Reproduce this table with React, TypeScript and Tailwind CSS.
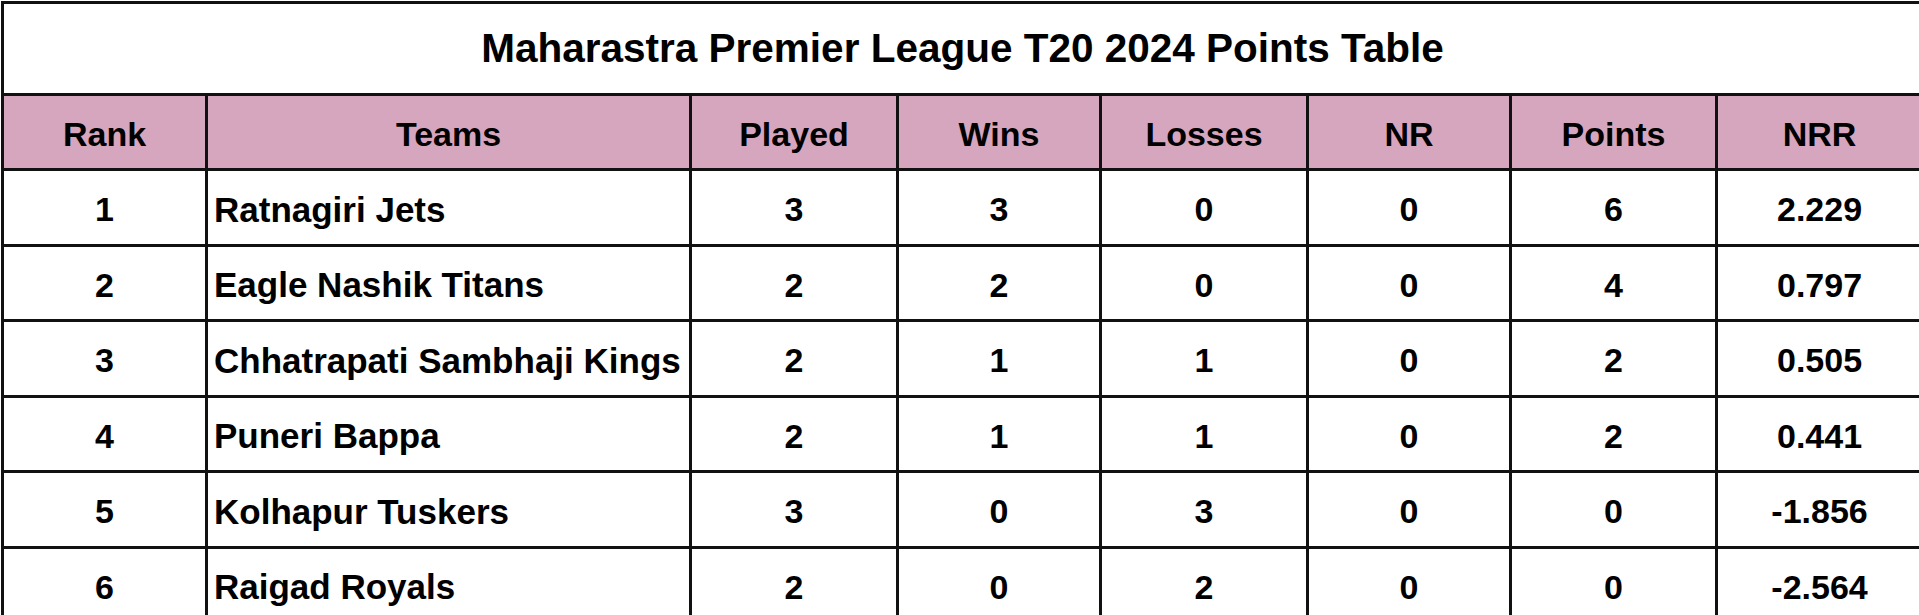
const COLS = [
  { label: 'Rank', w: 204 },
  { label: 'Teams', w: 484 },
  { label: 'Played', w: 207 },
  { label: 'Wins', w: 203 },
  { label: 'Losses', w: 207 },
  { label: 'NR', w: 203 },
  { label: 'Points', w: 206 },
  { label: 'NRR', w: 206 },
];

const ROWS = [
  { rank: 1, team: 'Ratnagiri Jets', played: 3, wins: 3, losses: 0, nr: 0, points: 6, nrr: '2.229' },
  { rank: 2, team: 'Eagle Nashik Titans', played: 2, wins: 2, losses: 0, nr: 0, points: 4, nrr: '0.797' },
  { rank: 3, team: 'Chhatrapati Sambhaji Kings', played: 2, wins: 1, losses: 1, nr: 0, points: 2, nrr: '0.505' },
  { rank: 4, team: 'Puneri Bappa', played: 2, wins: 1, losses: 1, nr: 0, points: 2, nrr: '0.441' },
  { rank: 5, team: 'Kolhapur Tuskers', played: 3, wins: 0, losses: 3, nr: 0, points: 0, nrr: '-1.856' },
  { rank: 6, team: 'Raigad Royals', played: 2, wins: 0, losses: 2, nr: 0, points: 0, nrr: '-2.564' },
];

export default function App() {
  const cell = 'border-[3px] border-[#111] text-center align-middle px-0 pb-0 pt-[4px]';

  return (
    <div className="w-[1919px] h-[615px] overflow-hidden bg-white pl-[1px] pt-[1px] font-['Liberation_Sans',Arial,sans-serif] font-bold text-black">
      <table className="table-fixed border-collapse w-[1922px]">
        <colgroup>
          {COLS.map(c => <col key={c.label} style={{ width: c.w }} />)}
        </colgroup>
        <thead>
          <tr>
            <th colSpan={8} className="border-[3px] border-[#111] text-center align-middle p-0 h-[92px] text-[40.5px] leading-none">
              Maharastra Premier League T20 2024 Points Table
            </th>
          </tr>
          <tr className="bg-[#d5a6bd]">
            {COLS.map(c => (
              <th key={c.label} className={`${cell} h-[75px] text-[34px] leading-none`}>{c.label}</th>
            ))}
          </tr>
        </thead>
        <tbody>
          {ROWS.map(r => (
            <tr key={r.rank} className="text-[34px] leading-none">
              <td className={`${cell} h-[75.5px]`}>{r.rank}</td>
              <td className={`${cell} !text-left !pl-[6px] text-[35px]`}>{r.team}</td>
              <td className={cell}>{r.played}</td>
              <td className={cell}>{r.wins}</td>
              <td className={cell}>{r.losses}</td>
              <td className={cell}>{r.nr}</td>
              <td className={cell}>{r.points}</td>
              <td className={cell}>{r.nrr}</td>
            </tr>
          ))}
        </tbody>
      </table>
    </div>
  );
}
